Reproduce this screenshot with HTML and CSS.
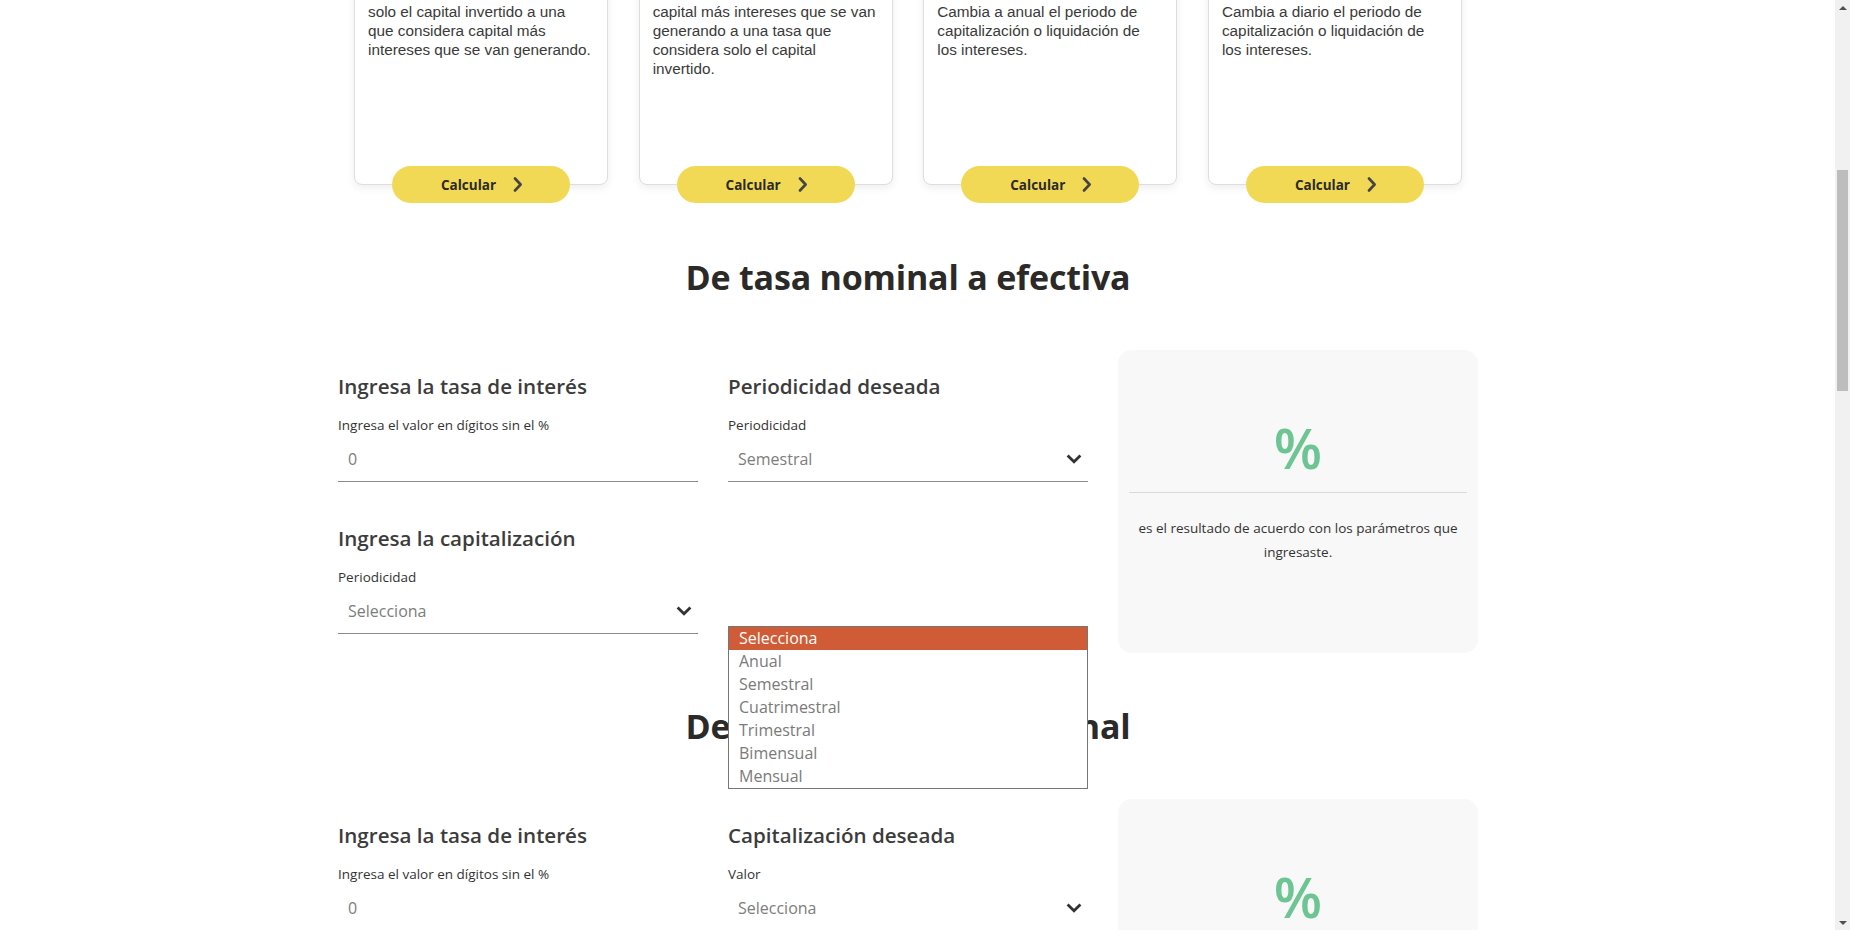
FILE: index.html
```html
<!DOCTYPE html>
<html lang="es">
<head>
<meta charset="utf-8">
<title>Calculadora de tasas</title>
<link rel="stylesheet" href="styles.css">
</head>
<body>
<div class="viewport">
  <div class="page-area">
    <main class="page">
      <div class="cards">
        <article class="card">
          <p class="card-text">solo el capital invertido a una<br>que considera capital más<br>intereses que se van generando.</p>
          <button class="btn">Calcular <svg width="10" height="15" viewBox="0 0 10 15"><path d="M2 1.5 L7.6 7.5 L2 13.5" stroke="#444" stroke-width="2.6" fill="none" stroke-linecap="round" stroke-linejoin="round"/></svg></button>
        </article>
        <article class="card">
          <p class="card-text">capital más intereses que se van<br>generando a una tasa que<br>considera solo el capital<br>invertido.</p>
          <button class="btn">Calcular <svg width="10" height="15" viewBox="0 0 10 15"><path d="M2 1.5 L7.6 7.5 L2 13.5" stroke="#444" stroke-width="2.6" fill="none" stroke-linecap="round" stroke-linejoin="round"/></svg></button>
        </article>
        <article class="card">
          <p class="card-text">Cambia a anual el periodo de<br>capitalización o liquidación de<br>los intereses.</p>
          <button class="btn">Calcular <svg width="10" height="15" viewBox="0 0 10 15"><path d="M2 1.5 L7.6 7.5 L2 13.5" stroke="#444" stroke-width="2.6" fill="none" stroke-linecap="round" stroke-linejoin="round"/></svg></button>
        </article>
        <article class="card">
          <p class="card-text">Cambia a diario el periodo de<br>capitalización o liquidación de<br>los intereses.</p>
          <button class="btn">Calcular <svg width="10" height="15" viewBox="0 0 10 15"><path d="M2 1.5 L7.6 7.5 L2 13.5" stroke="#444" stroke-width="2.6" fill="none" stroke-linecap="round" stroke-linejoin="round"/></svg></button>
        </article>
      </div>

      <section class="calc">
        <h2 class="calc-title">De tasa nominal a efectiva</h2>
        <div class="calc-grid">
          <div class="fields">
            <div class="field">
              <h3 class="field-title">Ingresa la tasa de interés</h3>
              <label class="field-label">Ingresa el valor en dígitos sin el %</label>
              <div class="control"><span class="control-value">0</span></div>
            </div>
            <div class="field">
              <h3 class="field-title">Periodicidad deseada</h3>
              <label class="field-label">Periodicidad</label>
              <div class="control"><span class="control-value">Semestral</span><svg width="16" height="10" viewBox="0 0 16 10"><path d="M1.6 1.6 L8 7.8 L14.4 1.6" stroke="#333" stroke-width="2.8" fill="none"/></svg></div>
            </div>
            <div class="field">
              <h3 class="field-title">Ingresa la capitalización</h3>
              <label class="field-label">Periodicidad</label>
              <div class="control"><span class="control-value">Selecciona</span><svg width="16" height="10" viewBox="0 0 16 10"><path d="M1.6 1.6 L8 7.8 L14.4 1.6" stroke="#333" stroke-width="2.8" fill="none"/></svg></div>
            </div>
            <ul class="dropdown">
              <li class="dropdown-item is-active">Selecciona</li>
              <li class="dropdown-item">Anual</li>
              <li class="dropdown-item">Semestral</li>
              <li class="dropdown-item">Cuatrimestral</li>
              <li class="dropdown-item">Trimestral</li>
              <li class="dropdown-item">Bimensual</li>
              <li class="dropdown-item">Mensual</li>
            </ul>
          </div>
          <div class="result">
            <div class="result-value">%</div>
            <hr class="result-rule">
            <p class="result-text">es el resultado de acuerdo con los parámetros que ingresaste.</p>
          </div>
        </div>
      </section>

      <section class="calc">
        <h2 class="calc-title">De tasa efectiva a nominal</h2>
        <div class="calc-grid">
          <div class="fields">
            <div class="field">
              <h3 class="field-title">Ingresa la tasa de interés</h3>
              <label class="field-label">Ingresa el valor en dígitos sin el %</label>
              <div class="control"><span class="control-value">0</span></div>
            </div>
            <div class="field">
              <h3 class="field-title">Capitalización deseada</h3>
              <label class="field-label">Valor</label>
              <div class="control"><span class="control-value">Selecciona</span><svg width="16" height="10" viewBox="0 0 16 10"><path d="M1.6 1.6 L8 7.8 L14.4 1.6" stroke="#333" stroke-width="2.8" fill="none"/></svg></div>
            </div>
          </div>
          <div class="result">
            <div class="result-value">%</div>
            <hr class="result-rule">
            <p class="result-text">es el resultado de acuerdo con los parámetros que ingresaste.</p>
          </div>
        </div>
      </section>
    </main>
  </div>
  <div class="scrollbar">
    <div class="sb-btn"><span class="sb-arrow-up"></span></div>
    <div class="sb-track"><div class="sb-thumb"></div></div>
    <div class="sb-btn"><span class="sb-arrow-down"></span></div>
  </div>
</div>
</body>
</html>
```

FILE: styles.css
```css
* { box-sizing: border-box; }

html, body {
  margin: 0;
  padding: 0;
  height: 100%;
  overflow: hidden;
  background: #fff;
  font-family: "Open Sans", "Noto Sans", sans-serif;
  color: #333;
}

.viewport {
  display: flex;
  height: 930px;
  width: 100%;
}

.page-area {
  flex: 1;
  overflow: hidden;
  padding-right: 19px;
}

.page {
  width: 1140px;
  margin: 0 auto;
}

/* ---------- cards ---------- */
.cards {
  display: flex;
  justify-content: space-between;
  padding: 0 16px 19px;
  margin-top: -20px;
}

.card {
  width: 254px;
  height: 205px;
  background: #fff;
  border: 1px solid #dedede;
  border-radius: 8px;
  box-shadow: 0 3px 8px rgba(0, 0, 0, 0.07);
  display: flex;
  flex-direction: column;
  align-items: center;
  justify-content: space-between;
  padding: 21px 0 0;
}

.card-text {
  margin: 0;
  align-self: stretch;
  padding: 0 4px 0 13px;
  white-space: nowrap;
  font-family: "Liberation Sans", Arial, sans-serif;
  font-size: 15.3px;
  line-height: 19px;
  color: #3a3a3a;
}

.btn {
  width: 178px;
  height: 37px;
  margin-bottom: -19px;
  border: 0;
  border-radius: 19px;
  background: #f2d955;
  display: flex;
  align-items: center;
  justify-content: center;
  gap: 17px;
  font-family: "Open Sans", sans-serif;
  font-weight: 700;
  font-size: 13.5px;
  color: #2c2a29;
  padding: 0 0 0 2px;
}

.btn svg { display: block; }

/* ---------- calculators ---------- */
.calc {
  margin-top: 50px;
}

.calc-title {
  margin: 0 0 50px;
  text-align: center;
  font-size: 34px;
  line-height: 46px;
  font-weight: 700;
  color: #2c2a29;
  letter-spacing: -0.2px;
}

.calc-grid {
  display: grid;
  grid-template-columns: 750px 360px;
  column-gap: 30px;
  align-items: start;
}

.fields {
  position: relative;
  display: grid;
  grid-template-columns: 360px 360px;
  column-gap: 30px;
  row-gap: 42px;
  padding-top: 22px;
}

.field-title {
  margin: 0;
  font-size: 20.6px;
  line-height: 28px;
  font-weight: 600;
  color: #3c3c3c;
}

.field-label {
  display: block;
  margin-top: 15px;
  font-size: 13.5px;
  line-height: 20px;
  color: #333;
}

.control {
  margin-top: 2px;
  height: 45px;
  border-bottom: 1px solid #8a8a8a;
  display: flex;
  align-items: center;
  justify-content: space-between;
  padding: 0 6px 0 10px;
}

.control-value {
  font-size: 16px;
  color: #7d7d7d;
}

.control svg { display: block; }

.dropdown {
  position: absolute;
  top: 276px;
  left: 390px;
  width: 360px;
  margin: 0;
  padding: 0;
  list-style: none;
  background: #fff;
  border: 1px solid #767676;
}

.dropdown-item {
  height: 23px;
  line-height: 23px;
  padding-left: 10px;
  font-size: 16px;
  color: #7a7a7a;
}

.dropdown-item.is-active {
  background: #cf5c36;
  color: #fff;
}

/* ---------- result box ---------- */
.result {
  height: 303px;
  background: #f8f8f8;
  border-radius: 14px;
  padding: 60px 11px 0;
  text-align: center;
}

.result-value {
  font-size: 56px;
  line-height: 74px;
  font-weight: 600;
  color: #6cc592;
}

.result-rule {
  margin: 8px 0 0;
  border: 0;
  border-top: 1px solid #d9d9d9;
}

.result-text {
  margin: 23px 0 0;
  font-size: 13.5px;
  line-height: 24px;
  color: #333;
}

/* ---------- scrollbar ---------- */
.scrollbar {
  width: 15px;
  flex: 0 0 15px;
  background: #f1f1f1;
  display: flex;
  flex-direction: column;
}

.sb-btn {
  height: 15px;
  display: flex;
  align-items: center;
  justify-content: center;
}

.sb-arrow-up {
  width: 0;
  height: 0;
  border-left: 4px solid transparent;
  border-right: 4px solid transparent;
  border-bottom: 4px solid #505050;
}

.sb-arrow-down {
  width: 0;
  height: 0;
  border-left: 4px solid transparent;
  border-right: 4px solid transparent;
  border-top: 4px solid #505050;
}

.sb-track {
  flex: 1;
  padding: 0 2px;
}

.sb-thumb {
  margin-top: 155px;
  height: 221px;
  background: #bdbdbd;
}
```
